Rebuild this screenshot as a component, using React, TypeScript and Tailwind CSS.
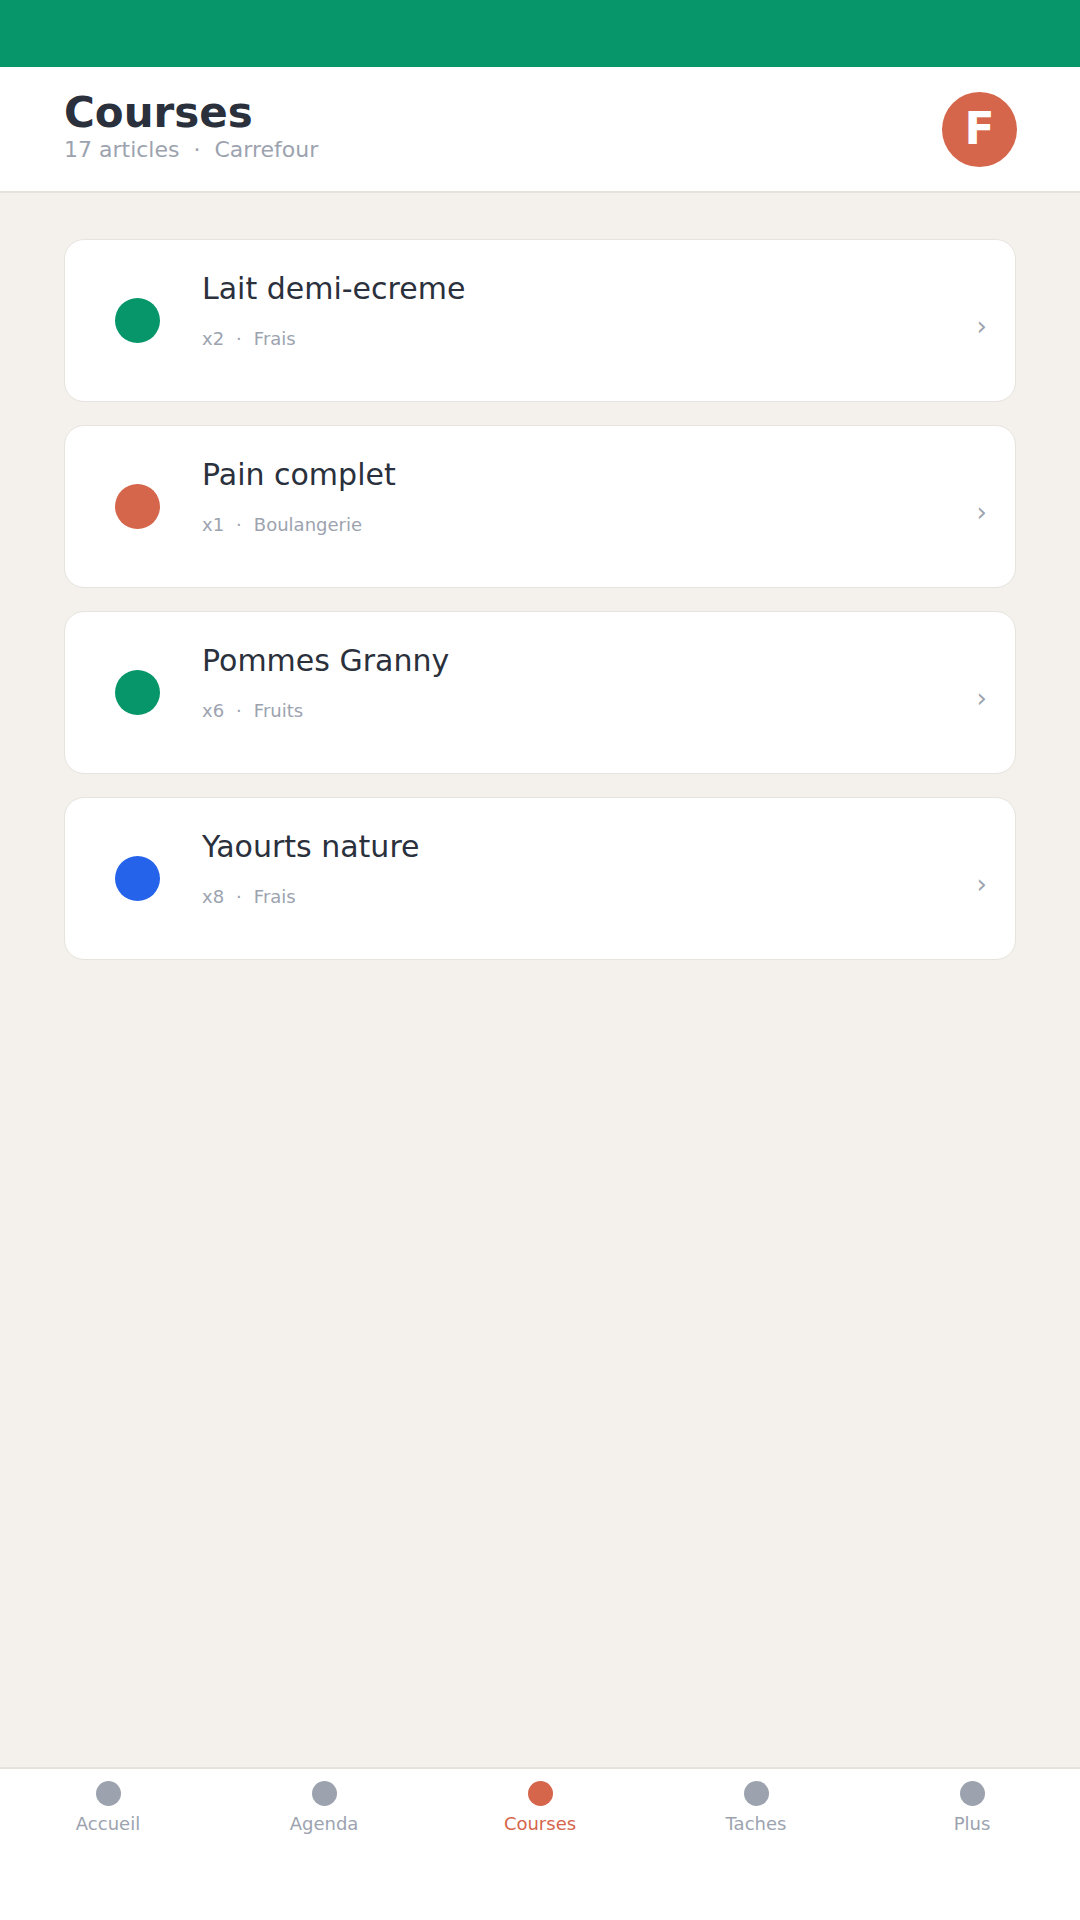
import React from "react";

interface Item {
  id: number;
  name: string;
  qty: string;
  category: string;
  color: string;
}

const ITEMS: Item[] = [
  { id: 1, name: "Lait demi-ecreme", qty: "x2", category: "Frais", color: "bg-[#069669]" },
  { id: 2, name: "Pain complet", qty: "x1", category: "Boulangerie", color: "bg-[#d5654b]" },
  { id: 3, name: "Pommes Granny", qty: "x6", category: "Fruits", color: "bg-[#069669]" },
  { id: 4, name: "Yaourts nature", qty: "x8", category: "Frais", color: "bg-[#2563eb]" },
];

const NAV = [
  { label: "Accueil", active: false },
  { label: "Agenda", active: false },
  { label: "Courses", active: true },
  { label: "Taches", active: false },
  { label: "Plus", active: false },
];

export default function App() {
  return (
    <div
      className="flex flex-col h-[1920px] w-[1080px] bg-[#f4f1ec]"
      style={{ fontFamily: '"DejaVu Sans", sans-serif' }}
    >
      {/* status bar */}
      <div className="h-[67px] bg-[#069669] shrink-0" />

      {/* header */}
      <header className="h-[126px] shrink-0 bg-white border-b-2 border-[#e5e2dd] pl-16 pr-[63px] flex items-center justify-between">
        <div className="flex flex-col pt-[2px]">
          <h1 className="text-[42px] leading-[40px] font-bold text-[#2a303c]">Courses</h1>
          <div className="flex items-center gap-[14px] text-[22px] leading-[34px] text-[#9ca3af]">
            <span>17 articles</span>
            <span>·</span>
            <span>Carrefour</span>
          </div>
        </div>
        <div className="w-[75px] h-[75px] rounded-full bg-[#d5654b] flex items-center justify-center text-white text-[44px] font-bold">
          F
        </div>
      </header>

      {/* list */}
      <main className="flex-1 px-16 pt-[46px] flex flex-col gap-[23px]">
        {ITEMS.map((item) => (
          <div
            key={item.id}
            className="h-[163px] bg-white border border-[#e7e3de] rounded-[20px] flex items-center pl-[50px] pr-[28px]"
          >
            <div className={`w-[45px] h-[45px] rounded-full shrink-0 ${item.color}`} />
            <div className="flex-1 ml-[42px] pb-[18px]">
              <div className="text-[30px] leading-[36px] text-[#2a303c]">{item.name}</div>
              <div className="mt-[18px] flex items-center gap-[12px] text-[18px] leading-[27px] text-[#9ca3af]">
                <span>{item.qty}</span>
                <span>·</span>
                <span>{item.category}</span>
              </div>
            </div>
            <span className="text-[26px] leading-none text-[#9ca3af] mt-[10px]">›</span>
          </div>
        ))}
      </main>

      {/* bottom nav */}
      <nav className="h-[153px] shrink-0 bg-white border-t-2 border-[#e5e2dd] grid grid-cols-5 pt-[12px]">
        {NAV.map((n) => (
          <div key={n.label} className="flex flex-col items-center">
            <div
              className={`w-[25px] h-[25px] rounded-full ${
                n.active ? "bg-[#d5654b]" : "bg-[#9ca3af]"
              }`}
            />
            <span
              className={`mt-[4px] text-[18px] leading-[27px] ${
                n.active ? "text-[#d5654b]" : "text-[#9ca3af]"
              }`}
            >
              {n.label}
            </span>
          </div>
        ))}
      </nav>
    </div>
  );
}
